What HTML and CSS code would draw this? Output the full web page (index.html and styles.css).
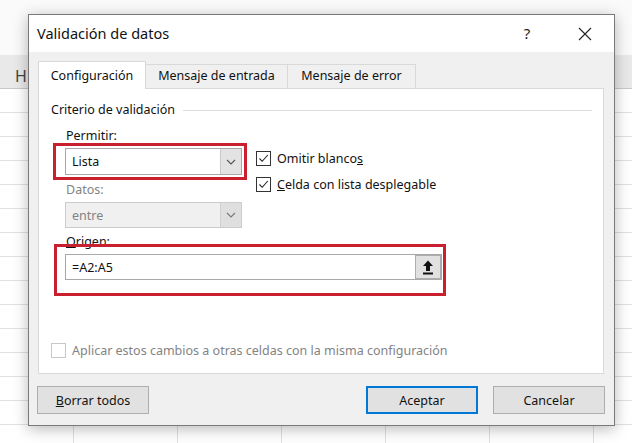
FILE: index.html
```html
<!DOCTYPE html>
<html lang="es">
<head>
<meta charset="utf-8">
<title>Validación de datos</title>
<link rel="stylesheet" href="styles.css">
</head>
<body>
<div class="sheet">
  <div class="col-header"><div class="col-cell">H</div></div>
  <div class="grid"></div>
</div>

<div class="dialog">
  <div class="titlebar">
    <span class="title">Validación de datos</span>
    <span class="help">?</span>
    <span class="close">
      <svg width="14" height="14" viewBox="0 0 14 14"><path d="M1 1 L13 13 M13 1 L1 13" stroke="#222" stroke-width="1.1" fill="none"/></svg>
    </span>
  </div>
  <div class="body">
    <div class="tabs">
      <div class="tab active tab-config">Configuración</div>
      <div class="tab tab-entrada">Mensaje de entrada</div>
      <div class="tab tab-error">Mensaje de error</div>
    </div>
    <div class="panel">
      <div class="legend"><span>Criterio de validación</span><span class="rule"></span></div>
      <div class="criteria">
        <div class="left-col">
          <div class="field-label label-permitir">Permitir:</div>
          <div class="select hl hl-select">
            <span class="select-text">Lista</span>
            <span class="drop"><svg width="10" height="6" viewBox="0 0 10 6"><path d="M1 1 L5 5 L9 1" stroke="#555" stroke-width="1.1" fill="none"/></svg></span>
          </div>
          <div class="field-label disabled label-datos">Datos:</div>
          <div class="select select-disabled">
            <span class="select-text">entre</span>
            <span class="drop"><svg width="10" height="6" viewBox="0 0 10 6"><path d="M1 1 L5 5 L9 1" stroke="#777" stroke-width="1.1" fill="none"/></svg></span>
          </div>
        </div>
        <div class="checks">
          <div class="check">
            <span class="box"><svg width="13" height="13" viewBox="0 0 13 13"><path d="M2.5 6.5 L5.2 9.3 L10.8 3" stroke="#222" stroke-width="1.1" fill="none"/></svg></span>
            <span>Omitir blanco<u>s</u></span>
          </div>
          <div class="check check-2">
            <span class="box"><svg width="13" height="13" viewBox="0 0 13 13"><path d="M2.5 6.5 L5.2 9.3 L10.8 3" stroke="#222" stroke-width="1.1" fill="none"/></svg></span>
            <span><u>C</u>elda con lista desplegable</span>
          </div>
        </div>
      </div>
      <div class="field-label label-origen"><u>O</u>rigen:</div>
      <div class="origin hl hl-origin">
        <span class="origin-text">=A2:A5</span>
        <span class="refbtn"><svg width="12" height="16" viewBox="0 0 12 16"><path d="M6 1.5 L11 7 L8 7 L8 12 L4 12 L4 7 L1 7 Z" fill="#111"/><rect x="1" y="13.5" width="10" height="2" fill="#111"/></svg></span>
      </div>
      <div class="check apply">
        <span class="box box-disabled"></span>
        <span>Aplicar estos cambios a otras celdas con la misma configuración</span>
      </div>
    </div>
    <div class="footer">
      <button class="btn"><u>B</u>orrar todos</button>
      <span class="spacer"></span>
      <button class="btn btn-primary">Aceptar</button>
      <button class="btn btn-cancel">Cancelar</button>
    </div>
  </div>
</div>
</body>
</html>
```

FILE: styles.css
```css
* { box-sizing: border-box; }
html, body { margin: 0; padding: 0; }
body {
  width: 632px;
  height: 443px;
  overflow: hidden;
  position: relative;
  background: #ffffff;
  font-family: "Segoe UI", "Noto Sans", sans-serif;
  font-size: 12.5px;
  color: #000;
}

/* background spreadsheet */
.sheet { height: 100%; padding-top: 55px; background: #fafafa; }
.col-header {
  height: 34px;
  background: #e9e9e9;
  border-bottom: 1px solid #c8c8c8;
  display: flex;
}
.col-cell {
  width: 104px;
  flex: none;
  margin-left: -31px;
  text-align: center;
  font-size: 16px;
  color: #444;
  padding-top: 10px;
  line-height: 22px;
}
.grid {
  height: 354px;
  background-color: #fff;
  background-image:
    repeating-linear-gradient(to bottom, transparent 0 23px, #e1e1e1 23px 24px),
    repeating-linear-gradient(to right, transparent 0 103px, #e1e1e1 103px 104px);
  background-position: 0 0, -30px 0;
}

/* dialog window */
.dialog {
  position: absolute;
  left: 28px;
  top: 14px;
  width: 587px;
  height: 412px;
  background: #f0f0f0;
  border: 1px solid #7a7a7a;
  box-shadow: 0 3px 14px rgba(0, 0, 0, 0.28);
  display: flex;
  flex-direction: column;
}
.titlebar {
  height: 37px;
  background: #fff;
  display: flex;
  align-items: center;
  flex: none;
}
.title {
  flex: 1;
  padding-left: 8px;
  font-size: 14.5px;
  padding-bottom: 1px;
  color: #111;
}
.help {
  width: 46px;
  text-align: center;
  font-size: 15px;
  color: #222;
  padding-bottom: 1px;
}
.close {
  width: 46px;
  margin-left: 12px;
  margin-right: 6px;
  display: flex;
  justify-content: center;
  align-items: center;
}

.body {
  flex: 1;
  padding: 9px 10px 0 9px;
}

/* tabs */
.tabs {
  height: 27px;
  display: flex;
  align-items: flex-end;
}
.tab {
  height: 24px;
  border: 1px solid #d9d9d9;
  border-bottom: none;
  background: #f0f0f0;
  text-align: center;
  line-height: 22px;
  margin-left: -1px;
  color: #111;
}
.tab.active {
  height: 28px;
  margin-left: 0;
  margin-bottom: -1px;
  background: #fff;
  position: relative;
  z-index: 1;
  line-height: 28px;
}
.tab-config { width: 108px; }
.tab-entrada { width: 143px; }
.tab-error { width: 129px; }

/* panel */
.panel {
  height: 286px;
  background: #fff;
  border: 1px solid #d9d9d9;
  padding: 13px 11px 15px 12px;
  display: flex;
  flex-direction: column;
  color: #111;
}
.legend {
  display: flex;
  align-items: center;
  height: 16px;
  line-height: 16px;
}
.rule {
  flex: 1;
  height: 1px;
  background: #dcdcdc;
  margin-left: 8px;
}

.criteria { display: flex; }
.left-col { width: 191px; flex: none; }
.field-label {
  line-height: 16px;
  height: 16px;
  margin-left: 15px;
  margin-bottom: 4px;
}
.label-permitir { margin-top: 10px; }
.label-datos { margin-top: 7px; }
.label-origen { margin-top: 6px; }
.disabled { color: #838383; }

.select {
  margin-left: 14px;
  width: 177px;
  height: 27px;
  border: 1px solid #a8a8a8;
  background: #fff;
  display: flex;
  align-items: stretch;
}
.select-text {
  flex: 1;
  padding-left: 6px;
  display: flex;
  align-items: center;
}
.drop {
  width: 21px;
  background: #e3e3e3;
  border-left: 1px solid #c8c8c8;
  display: flex;
  align-items: center;
  justify-content: center;
}
.select-disabled {
  background: #f0f0f0;
  border-color: #cccccc;
  color: #838383;
  height: 26px;
}
.select-disabled .drop { background: #dfdfdf; border-left-color: #d0d0d0; }

.hl { position: relative; }
.hl::after {
  content: "";
  position: absolute;
  border: 3px solid #c8202f;
  pointer-events: none;
}
.hl-select::after { left: -13px; right: -6px; top: -6px; bottom: -6px; }
.hl-origin::after { left: -12px; right: -5px; top: -11px; bottom: -17px; }

.checks {
  margin-left: 14px;
  padding-top: 33px;
}
.check {
  display: flex;
  align-items: center;
  height: 15px;
  line-height: 15px;
}
.check-2 { margin-top: 11px; }
.box {
  width: 15px;
  height: 15px;
  flex: none;
  border: 1px solid #333;
  background: #fff;
  margin-right: 6px;
  display: flex;
  align-items: center;
  justify-content: center;
}
.box-disabled { border-color: #c8c8c8; }

.origin {
  margin-left: 14px;
  width: 377px;
  height: 26px;
  border: 1px solid #a8a8a8;
  background: #fff;
  display: flex;
  align-items: stretch;
}
.origin-text {
  flex: 1;
  padding-left: 6px;
  display: flex;
  align-items: center;
}
.refbtn {
  width: 26px;
  background: #e1e1e1;
  border: 1px solid #adadad;
  display: flex;
  align-items: center;
  justify-content: center;
}

.apply {
  margin-top: auto;
  color: #838383;
}

/* footer */
.footer {
  display: flex;
  margin: 12px -1px 0 -1px;
}
.spacer { flex: 1; }
.btn {
  width: 112px;
  height: 28px;
  background: #e1e1e1;
  border: 1px solid #adadad;
  font-family: inherit;
  font-size: 12.5px;
  color: #111;
  padding: 0;
}
.btn-primary { border: 2px solid #0078d7; }
.btn-cancel { margin-left: 15px; }
```
